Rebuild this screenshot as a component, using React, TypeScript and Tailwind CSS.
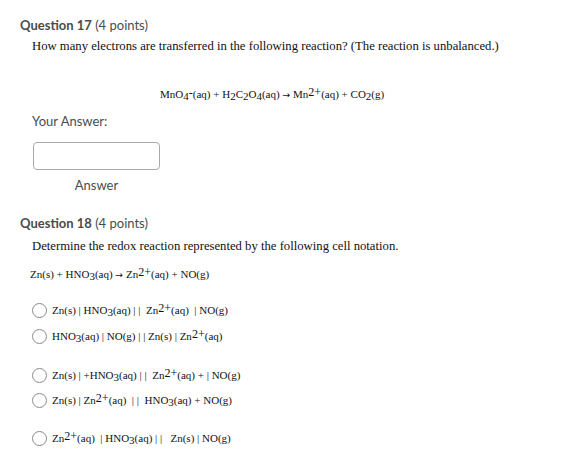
import React from 'react';

const Sub: React.FC<{ children: React.ReactNode }> = ({ children }) => (
    <span className="relative top-[2px]">{children}</span>
);
const Sup: React.FC<{ children: React.ReactNode }> = ({ children }) => (
    <span className="relative -top-[2px] text-[1.1em]">{children}</span>
);
const Arrow = () => <span className="font-['DejaVu_Sans',sans-serif] text-[0.85em]">→</span>;

const Radio: React.FC<{ children: React.ReactNode; className?: string }> = ({ children, className }) => (
    <div className={`flex items-center h-5 ${className ?? ''}`}>
        <span className="w-[15px] h-[15px] rounded-full border border-[#8a8a8a] bg-white mr-[5px] shrink-0" />
        <span className="text-[11px] text-[#111] whitespace-pre">{children}</span>
    </div>
);

const App: React.FC = () => {
    return (
        <div className="w-[578px] h-[458px] bg-white overflow-hidden font-['Liberation_Serif',serif] text-[#111]">
            <div className="pl-[20px]">
                <div className="mt-[15px] leading-5 text-[13px] text-[#494c4e] font-['Lato',sans-serif]">
                    <span className="font-bold">Question 17</span> (4 points)
                </div>
                <div className="mt-[1px] pl-[12px] leading-5 text-[12.7px]">
                    How many electrons are transferred in the following reaction? (The reaction is unbalanced.)
                </div>
                <div className="mt-[28px] pl-[140px] leading-5 text-[11px] whitespace-pre">
                    MnO<Sub>4</Sub><Sup>-</Sup>(aq) + H<Sub>2</Sub>C<Sub>2</Sub>O<Sub>4</Sub>(aq) <Arrow /> Mn<Sup>2+</Sup>(aq) + CO<Sub>2</Sub>(g)
                </div>
                <div className="mt-[6px] pl-[12px] leading-5 text-[13px] text-[#494c4e] font-['Lato',sans-serif]">
                    Your Answer:
                </div>
                <div className="mt-[11px] ml-[13px] w-[127px] h-[28px] rounded-[4px] border border-[#a9a9a9] bg-white" />
                <div className="mt-[5px] ml-[13px] w-[127px] text-center leading-5 text-[13px] text-[#494c4e] font-['Lato',sans-serif]">
                    Answer
                </div>

                <div className="mt-[18px] leading-5 text-[13px] text-[#494c4e] font-['Lato',sans-serif]">
                    <span className="font-bold">Question 18</span> (4 points)
                </div>
                <div className="mt-[3px] pl-[12px] leading-5 text-[12.7px]">
                    Determine the redox reaction represented by the following cell notation.
                </div>
                <div className="mt-[8px] pl-[10px] leading-5 text-[11px] whitespace-pre">
                    Zn(s) + HNO<Sub>3</Sub>(aq) <Arrow /> Zn<Sup>2+</Sup>(aq) + NO(g)
                </div>

                <div className="pl-[12px]">
                    <Radio className="mt-[15px]">
                        Zn(s) | HNO<Sub>3</Sub>(aq) | |  Zn<Sup>2+</Sup>(aq)  | NO(g)
                    </Radio>
                    <Radio className="mt-[6px]">
                        HNO<Sub>3</Sub>(aq) | NO(g) | | Zn(s) | Zn<Sup>2+</Sup>(aq)
                    </Radio>
                    <Radio className="mt-[19px]">
                        Zn(s) | +HNO<Sub>3</Sub>(aq) | |  Zn<Sup>2+</Sup>(aq) + | NO(g)
                    </Radio>
                    <Radio className="mt-[5px]">
                        Zn(s) | Zn<Sup>2+</Sup>(aq)  | |  HNO<Sub>3</Sub>(aq) + NO(g)
                    </Radio>
                    <Radio className="mt-[18px]">
                        Zn<Sup>2+</Sup>(aq)  | HNO<Sub>3</Sub>(aq) | |   Zn(s) | NO(g)
                    </Radio>
                </div>
            </div>
        </div>
    );
};

export default App;
